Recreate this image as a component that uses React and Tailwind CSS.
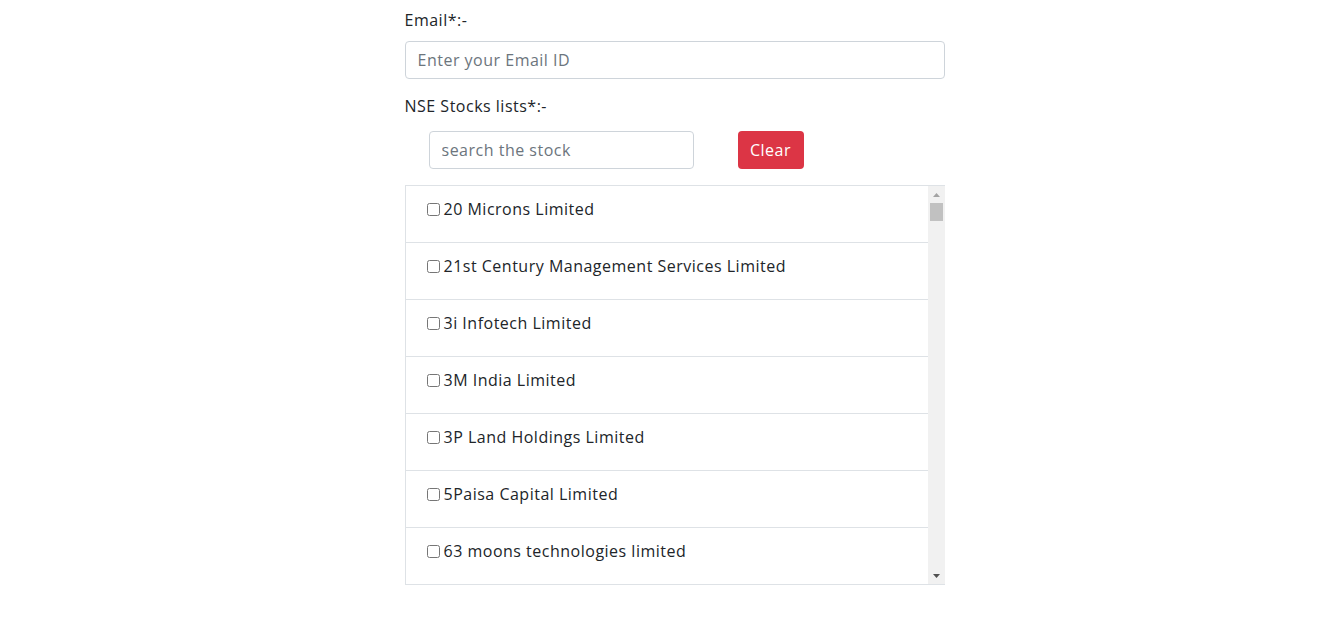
import { useState } from "react";

const stocks = [
  "20 Microns Limited",
  "21st Century Management Services Limited",
  "3i Infotech Limited",
  "3M India Limited",
  "3P Land Holdings Limited",
  "5Paisa Capital Limited",
  "63 moons technologies limited",
];

const App = () => {
  const [email, setEmail] = useState("");
  const [search, setSearch] = useState("");

  return (
    <div
      className="min-h-screen bg-white text-[#212529] pl-[10px] tracking-[0.5px]"
      style={{ fontFamily: '"Open Sans", "Liberation Sans", sans-serif' }}
    >
      <div className="w-[540px] mx-auto pt-2">
        {/* Email */}
        <label className="block text-base leading-6 mb-[9px]">Email*:-</label>
        <input
          type="text"
          placeholder="Enter your Email ID"
          value={email}
          onChange={(e) => setEmail(e.target.value)}
          className="block w-full h-[38px] px-3 text-base border border-[#ced4da] rounded placeholder-[#6c757d] outline-none"
        />

        {/* Stocks */}
        <label className="block text-base leading-6 mt-[15px] mb-[13px]">NSE Stocks lists*:-</label>
        <div className="flex items-center pl-6 gap-11">
          <input
            type="text"
            placeholder="search the stock"
            value={search}
            onChange={(e) => setSearch(e.target.value)}
            className="w-[265px] h-[38px] px-3 text-base border border-[#ced4da] rounded placeholder-[#6c757d] outline-none"
          />
          <button
            onClick={() => setSearch("")}
            className="w-[66px] h-[38px] bg-[#dc3545] text-white text-base rounded"
          >
            Clear
          </button>
        </div>

        {/* List */}
        <div className="mt-4 h-[400px] flex border border-[#dee2e6] border-r-0">
          <div className="flex-1 overflow-hidden">
            {stocks
              .filter((s) => s.toLowerCase().includes(search.toLowerCase()))
              .map((s) => (
                <div
                  key={s}
                  className="h-[57px] border-b border-[#dee2e6] px-5 pt-[11px] flex items-start"
                >
                  <label className="flex items-center h-6 text-base text-[#212529]">
                    <input type="checkbox" className="w-[13px] h-[13px] ml-[1px] mr-1" />
                    {s}
                  </label>
                </div>
              ))}
          </div>
          {/* scrollbar */}
          <div className="w-[17px] bg-[#f1f1f1] flex flex-col items-center">
            <div className="h-[17px] flex items-center justify-center">
              <svg width="7" height="4" viewBox="0 0 7 4">
                <path d="M3.5 0L7 4H0z" fill="#a3a3a3" />
              </svg>
            </div>
            <div className="w-[13px] h-[18px] bg-[#c1c1c1]" />
            <div className="flex-1" />
            <div className="h-[17px] flex items-center justify-center">
              <svg width="7" height="4" viewBox="0 0 7 4">
                <path d="M0 0H7L3.5 4z" fill="#505050" />
              </svg>
            </div>
          </div>
        </div>
      </div>
    </div>
  );
};

export default App;
